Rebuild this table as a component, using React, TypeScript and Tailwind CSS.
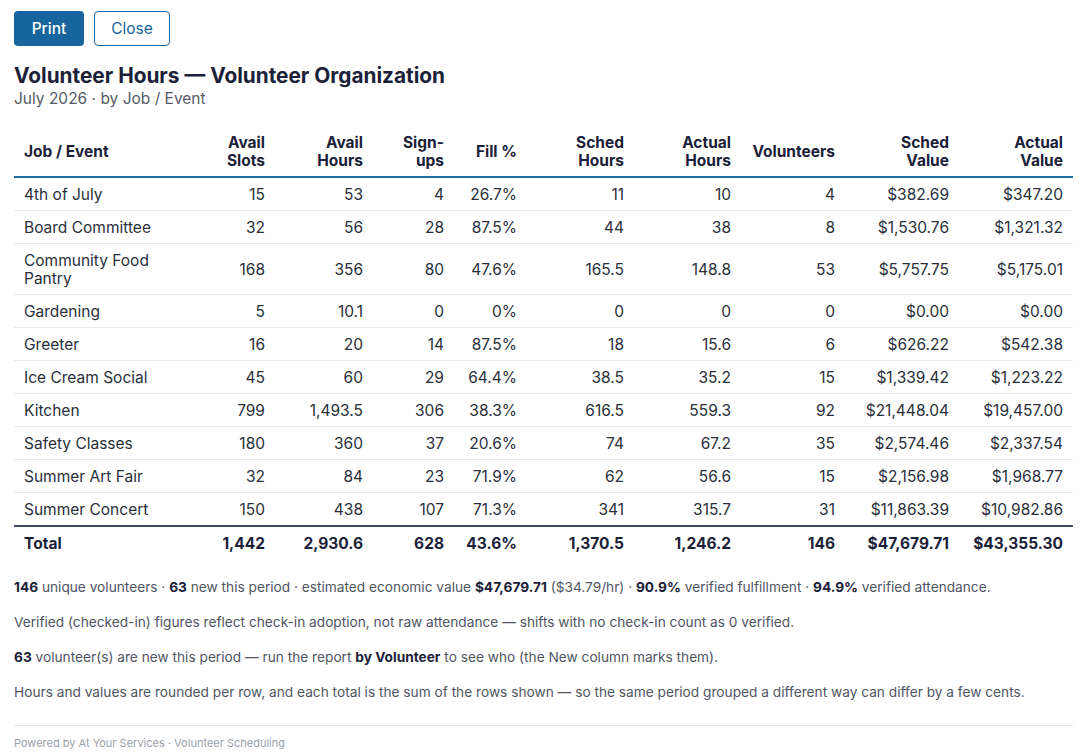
const rows: string[][] = [
  ["4th of July", "15", "53", "4", "26.7%", "11", "10", "4", "$382.69", "$347.20"],
  ["Board Committee", "32", "56", "28", "87.5%", "44", "38", "8", "$1,530.76", "$1,321.32"],
  ["Community Food Pantry", "168", "356", "80", "47.6%", "165.5", "148.8", "53", "$5,757.75", "$5,175.01"],
  ["Gardening", "5", "10.1", "0", "0%", "0", "0", "0", "$0.00", "$0.00"],
  ["Greeter", "16", "20", "14", "87.5%", "18", "15.6", "6", "$626.22", "$542.38"],
  ["Ice Cream Social", "45", "60", "29", "64.4%", "38.5", "35.2", "15", "$1,339.42", "$1,223.22"],
  ["Kitchen", "799", "1,493.5", "306", "38.3%", "616.5", "559.3", "92", "$21,448.04", "$19,457.00"],
  ["Safety Classes", "180", "360", "37", "20.6%", "74", "67.2", "35", "$2,574.46", "$2,337.54"],
  ["Summer Art Fair", "32", "84", "23", "71.9%", "62", "56.6", "15", "$2,156.98", "$1,968.77"],
  ["Summer Concert", "150", "438", "107", "71.3%", "341", "315.7", "31", "$11,863.39", "$10,982.86"],
];

const total = ["Total", "1,442", "2,930.6", "628", "43.6%", "1,370.5", "1,246.2", "146", "$47,679.71", "$43,355.30"];

const headers: [string, string?][] = [
  ["Job / Event"],
  ["Avail", "Slots"],
  ["Avail", "Hours"],
  ["Sign-", "ups"],
  ["Fill %"],
  ["Sched", "Hours"],
  ["Actual", "Hours"],
  ["Volunteers"],
  ["Sched", "Value"],
  ["Actual", "Value"],
];

const widths = ["w-[172px]", "w-[89px]", "w-[98px]", "w-[81px]", "w-[73px]", "w-[107px]", "w-[107px]", "w-[104px]", "w-[114px]", "w-[114px]"];

export default function App() {
  return (
    <div className="min-h-screen bg-white px-[14px] pt-[11px] text-[#2a2f3b] font-['Inter','Noto_Sans',sans-serif]">
      <div className="flex gap-[10px]">
        <button className="h-[35px] w-[70px] rounded-[4px] bg-[#17659c] text-[15.5px] font-medium text-white">Print</button>
        <button className="h-[35px] w-[76px] rounded-[4px] border border-[#17659c] bg-white text-[15.5px] text-[#17659c]">Close</button>
      </div>

      <h1 className="mt-[17px] text-[20.8px] font-bold leading-[26px] text-[#1b2138]">
        Volunteer Hours — Volunteer Organization
      </h1>
      <div className="text-[15.5px] leading-[20px] text-[#555b66]">July 2026 · by Job / Event</div>

      <table className="mt-[18px] w-[1059px] table-fixed border-collapse text-[15.5px] leading-[18px]">
        <colgroup>
          {widths.map((w, i) => (
            <col key={i} className={w} />
          ))}
        </colgroup>
        <thead>
          <tr className="border-b-2 border-[#1f6b9c]">
            {headers.map(([a, b], i) => (
              <th
                key={i}
                className={`px-[10px] pt-[7px] pb-[6px] align-middle font-bold text-[#1b2138] ${i === 0 ? "text-left" : "text-right"}`}
              >
                {a}
                {b && (
                  <>
                    <br />
                    {b}
                  </>
                )}
              </th>
            ))}
          </tr>
        </thead>
        <tbody>
          {rows.map((r, ri) => (
            <tr key={ri} className={ri === rows.length - 1 ? "" : "border-b border-[#e6e8ec]"}>
              {r.map((c, ci) => (
                <td key={ci} className={`px-[10px] pt-[8px] pb-[6px] ${ci === 0 ? "text-left" : "text-right"}`}>
                  {c}
                </td>
              ))}
            </tr>
          ))}
          <tr className="border-t-2 border-[#3c4b68]">
            {total.map((c, ci) => (
              <td
                key={ci}
                className={`px-[10px] pt-[8px] pb-[7px] font-bold text-[#1b2138] ${ci === 0 ? "text-left" : "text-right"}`}
              >
                {c}
              </td>
            ))}
          </tr>
        </tbody>
      </table>

      <div className="mt-[18px] flex flex-col gap-[17px] text-[13.7px] leading-[18px] text-[#4f5563]">
        <p>
          <b className="text-[#1b2138]">146</b> unique volunteers · <b className="text-[#1b2138]">63</b> new this period · estimated economic value{" "}
          <b className="text-[#1b2138]">$47,679.71</b> ($34.79/hr) · <b className="text-[#1b2138]">90.9%</b> verified fulfillment ·{" "}
          <b className="text-[#1b2138]">94.9%</b> verified attendance.
        </p>
        <p>Verified (checked-in) figures reflect check-in adoption, not raw attendance — shifts with no check-in count as 0 verified.</p>
        <p>
          <b className="text-[#1b2138]">63</b> volunteer(s) are new this period — run the report <b className="text-[#1b2138]">by Volunteer</b> to see who (the New column marks them).
        </p>
        <p>Hours and values are rounded per row, and each total is the sum of the rows shown — so the same period grouped a different way can differ by a few cents.</p>
      </div>

      <div className="mt-[24px] w-[1059px] border-t border-[#e3e5e9] pt-[10px] text-[11px] leading-[14px] text-[#9a9fa8]">
        Powered by At Your Services · Volunteer Scheduling
      </div>
    </div>
  );
}
